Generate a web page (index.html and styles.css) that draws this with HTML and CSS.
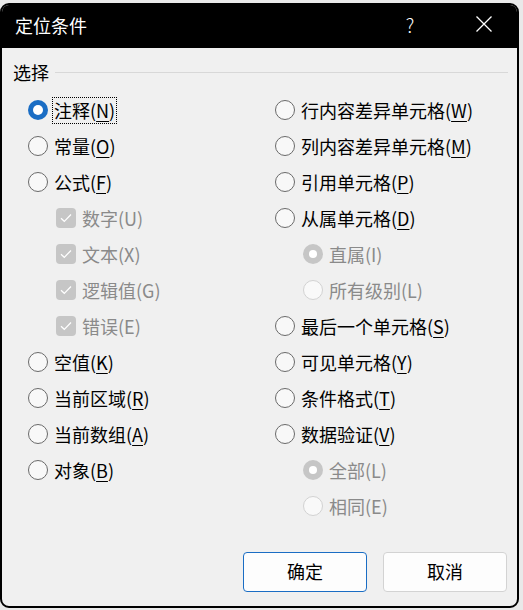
FILE: index.html
```html
<!DOCTYPE html>
<html lang="zh-CN">
<head>
<meta charset="utf-8">
<title>定位条件</title>
<link rel="stylesheet" href="styles.css">
</head>
<body>
<div class="dialog">
  <div class="titlebar">
    <span class="title">定位条件</span>
    <span class="help">?</span>
    <span class="close">
      <svg width="16" height="16" viewBox="0 0 16 16"><path d="M0.5 0.5 L15.5 15.5 M15.5 0.5 L0.5 15.5" stroke="#fff" stroke-width="1.3" fill="none"/></svg>
    </span>
  </div>
  <div class="content">
    <div class="group-head"><span class="group-label">选择</span><span class="group-line"></span></div>
    <div class="options">
      <div class="col">
        <div class="row"><span class="radio checked"></span><span class="label focus">注释(<u>N</u>)</span></div>
        <div class="row"><span class="radio"></span><span class="label">常量(<u>O</u>)</span></div>
        <div class="row"><span class="radio"></span><span class="label">公式(<u>F</u>)</span></div>
        <div class="row sub"><span class="check"><svg width="12" height="10" viewBox="0 0 12 10"><path d="M1 5.2 L4.3 8.3 L11 1.5" stroke="#fff" stroke-width="1.2" fill="none"/></svg></span><span class="label disabled">数字(U)</span></div>
        <div class="row sub"><span class="check"><svg width="12" height="10" viewBox="0 0 12 10"><path d="M1 5.2 L4.3 8.3 L11 1.5" stroke="#fff" stroke-width="1.2" fill="none"/></svg></span><span class="label disabled">文本(X)</span></div>
        <div class="row sub"><span class="check"><svg width="12" height="10" viewBox="0 0 12 10"><path d="M1 5.2 L4.3 8.3 L11 1.5" stroke="#fff" stroke-width="1.2" fill="none"/></svg></span><span class="label disabled">逻辑值(G)</span></div>
        <div class="row sub"><span class="check"><svg width="12" height="10" viewBox="0 0 12 10"><path d="M1 5.2 L4.3 8.3 L11 1.5" stroke="#fff" stroke-width="1.2" fill="none"/></svg></span><span class="label disabled">错误(E)</span></div>
        <div class="row"><span class="radio"></span><span class="label">空值(<u>K</u>)</span></div>
        <div class="row"><span class="radio"></span><span class="label">当前区域(<u>R</u>)</span></div>
        <div class="row"><span class="radio"></span><span class="label">当前数组(<u>A</u>)</span></div>
        <div class="row"><span class="radio"></span><span class="label">对象(<u>B</u>)</span></div>
      </div>
      <div class="col">
        <div class="row"><span class="radio"></span><span class="label">行内容差异单元格(<u>W</u>)</span></div>
        <div class="row"><span class="radio"></span><span class="label">列内容差异单元格(<u>M</u>)</span></div>
        <div class="row"><span class="radio"></span><span class="label">引用单元格(<u>P</u>)</span></div>
        <div class="row"><span class="radio"></span><span class="label">从属单元格(<u>D</u>)</span></div>
        <div class="row sub"><span class="radio dis-checked"></span><span class="label disabled">直属(I)</span></div>
        <div class="row sub"><span class="radio dis"></span><span class="label disabled">所有级别(L)</span></div>
        <div class="row"><span class="radio"></span><span class="label">最后一个单元格(<u>S</u>)</span></div>
        <div class="row"><span class="radio"></span><span class="label">可见单元格(<u>Y</u>)</span></div>
        <div class="row"><span class="radio"></span><span class="label">条件格式(<u>T</u>)</span></div>
        <div class="row"><span class="radio"></span><span class="label">数据验证(<u>V</u>)</span></div>
        <div class="row sub"><span class="radio dis-checked"></span><span class="label disabled">全部(L)</span></div>
        <div class="row sub"><span class="radio dis"></span><span class="label disabled">相同(E)</span></div>
      </div>
    </div>
    <div class="footer">
      <button class="btn primary">确定</button>
      <button class="btn">取消</button>
    </div>
  </div>
</div>
</body>
</html>
```

FILE: styles.css
```css
html, body {
  margin: 0;
  padding: 0;
}
body {
  width: 523px;
  height: 610px;
  background: #e9e9e9;
  font-family: "Noto Sans CJK SC", "Noto Sans", sans-serif;
  overflow: hidden;
}
.dialog {
  box-sizing: border-box;
  width: 519px;
  height: 605px;
  margin-top: 3px;
  border: 2px solid #000;
  border-radius: 9px;
  background: #f0f0f0;
  overflow: hidden;
  display: flex;
  flex-direction: column;
}
.titlebar {
  height: 43px;
  flex: none;
  background: #000;
  color: #fff;
  display: flex;
  align-items: center;
  padding-left: 13px;
  font-size: 18px;
}
.title {
  line-height: 24px;
  margin-top: -4px;
  flex: 1;
}
.help {
  font-size: 19px;
  font-weight: 300;
  line-height: 24px;
  margin-top: -4px;
  width: 16px;
  text-align: center;
  margin-right: 58px;
}
.close {
  display: flex;
  width: 16px;
  height: 16px;
  margin-right: 25px;
  margin-top: -6px;
}
.content {
  flex: 1;
  display: flex;
  flex-direction: column;
  padding: 12px 10px 14px 11px;
}
.group-head {
  display: flex;
  align-items: center;
  height: 24px;
  font-size: 18px;
  color: #000;
}
.group-label {
  line-height: 24px;
}
.group-line {
  flex: 1;
  height: 1px;
  background: #d8d8d8;
  margin-left: 6px;
  margin-right: -1px;
}
.options {
  margin-top: 8px;
  display: grid;
  grid-template-columns: 247px 1fr;
  padding-left: 15px;
}
.row {
  height: 36px;
  display: flex;
  align-items: center;
  font-size: 18px;
  color: #000;
}
.row.sub {
  padding-left: 28px;
}
.label {
  line-height: 24px;
  margin-left: 6px;
  white-space: nowrap;
}
.label u {
  text-decoration-thickness: 1px;
  text-underline-offset: 3px;
}
.label.focus {
  border: 1px dotted #000;
  line-height: 25px;
  padding: 0 1px;
  margin-left: 4px;
}
.label.disabled {
  color: #8a8a8a;
}
.radio {
  box-sizing: border-box;
  width: 20px;
  height: 20px;
  border-radius: 50%;
  border: 1px solid #6a6a6a;
  background: #f8f8f8;
  flex: none;
  position: relative;
}
.radio.checked {
  border: none;
  background: #1a6dc4;
}
.radio.checked::after,
.radio.dis-checked::after {
  content: "";
  position: absolute;
  left: 5px;
  top: 5px;
  width: 10px;
  height: 10px;
  border-radius: 50%;
  background: #fff;
}
.radio.dis-checked {
  border: none;
  background: #c6c6c6;
}
.radio.dis-checked::after {
  left: 6px;
  top: 6px;
  width: 8px;
  height: 8px;
}
.radio.dis {
  border-color: #d2d2d2;
  background: #f9f9f9;
}
.check {
  box-sizing: border-box;
  width: 20px;
  height: 20px;
  border-radius: 4px;
  background: #c6c6c6;
  flex: none;
  display: flex;
  align-items: center;
  justify-content: center;
}
.footer {
  margin-top: auto;
  display: flex;
  justify-content: flex-end;
  gap: 16px;
}
.btn {
  box-sizing: border-box;
  width: 124px;
  height: 40px;
  border: 1px solid #d3d3d3;
  border-radius: 4px;
  background: #fdfdfd;
  font-family: "Noto Sans CJK SC", "Noto Sans", sans-serif;
  font-size: 18px;
  color: #000;
  padding: 0 0 2px;
}
.btn.primary {
  border-color: #1a6dc4;
}
```
